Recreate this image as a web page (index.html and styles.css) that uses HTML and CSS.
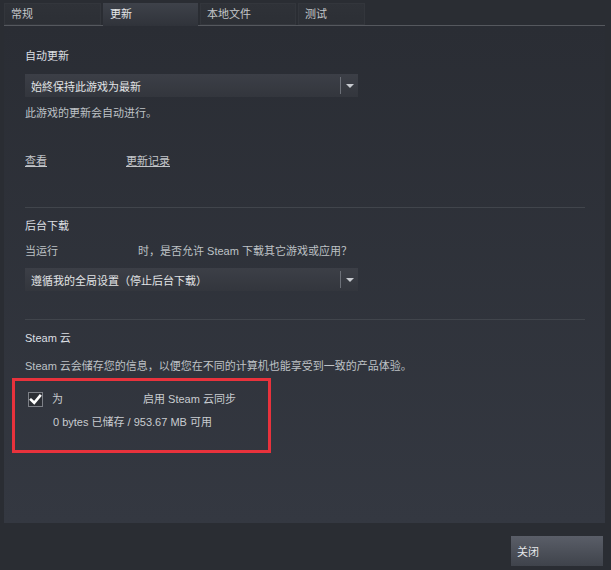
FILE: index.html
```html
<!DOCTYPE html>
<html lang="zh-CN">
<head>
<meta charset="utf-8">
<title>属性 - 更新</title>
<link rel="stylesheet" href="styles.css">
</head>
<body>
<div class="window">
  <div class="tabs">
    <div class="tab wide">常规</div>
    <div class="tab active">更新</div>
    <div class="tab mid">本地文件</div>
    <div class="tab short">测试</div>
  </div>
  <div class="panel">
    <div class="heading">自动更新</div>
    <div class="select">
      <span class="select-text">始終保持此游戏为最新</span>
      <span class="select-btn"><span class="arrow"></span></span>
    </div>
    <div class="text note">此游戏的更新会自动进行。</div>
    <div class="links">
      <a class="link">查看</a>
      <a class="link second">更新记录</a>
    </div>
    <div class="sep first-sep"></div>
    <div class="heading sub">后台下载</div>
    <div class="text ask"><span class="gap-left">当运行</span><span>时，是否允许 Steam 下载其它游戏或应用？</span></div>
    <div class="select second-select">
      <span class="select-text">遵循我的全局设置（停止后台下载）</span>
      <span class="select-btn"><span class="arrow"></span></span>
    </div>
    <div class="sep second-sep"></div>
    <div class="heading sub">Steam 云</div>
    <div class="text desc">Steam 云会储存您的信息，以便您在不同的计算机也能享受到一致的产品体验。</div>
    <div class="cloud-box">
      <div class="check-row">
        <span class="checkbox">
          <svg width="13" height="13" viewBox="0 0 13 13"><path d="M2 6.8 L5.2 9.8 L11 2.8" fill="none" stroke="#ffffff" stroke-width="2.6" stroke-linecap="square"/></svg>
        </span>
        <span class="check-label"><span class="gap-for">为</span><span>启用 Steam 云同步</span></span>
      </div>
      <div class="text usage">0 bytes 已储存 / 953.67 MB 可用</div>
    </div>
  </div>
  <div class="footer">
    <button class="close-btn">关闭</button>
  </div>
</div>
</body>
</html>
```

FILE: styles.css
```css
html, body {
  margin: 0;
  padding: 0;
}
body {
  background: #2a2d33;
  font-family: "Liberation Sans", "Noto Sans CJK SC", Arial, sans-serif;
  font-size: 11px;
  color: #bec2c6;
  width: 611px;
  height: 570px;
  overflow: hidden;
}
.window {
  display: flex;
  flex-direction: column;
}
.tabs {
  display: flex;
  gap: 2px;
  padding: 3px 0 0 4px;
  height: 22px;
}
.tab {
  width: 88px;
  padding-left: 7px;
  line-height: 22px;
  color: #c4c7ca;
  background: linear-gradient(#2f3238, #2c2f35);
  box-shadow: inset 0 0 0 1px #33363c;
}
.tab.wide {
  width: 90px;
}
.tab.mid {
  width: 89px;
}
.tab.short {
  width: 60px;
}
.tab.active {
  background: linear-gradient(#3e424a, #30333a);
  color: #e4e6e8;
  box-shadow: none;
  position: relative;
  z-index: 1;
  margin-bottom: -1px;
}
.panel {
  margin: 0 6px 0 4px;
  height: 498px;
  border-top: 1px solid #55585e;
  background: linear-gradient(#2a2d34, #343841);
  padding: 22px 20px 0 21px;
  box-sizing: border-box;
  display: flex;
  flex-direction: column;
  align-items: flex-start;
}
.heading {
  line-height: 16px;
  color: #dcdfe2;
}
.text {
  line-height: 16px;
}
.select {
  margin-top: 10px;
  width: 333px;
  height: 23px;
  display: flex;
  align-items: center;
  background: linear-gradient(#3c3f47, #33363d);
  color: #e2e4e6;
  box-sizing: border-box;
}
.select-text {
  flex: 1;
  padding-left: 6px;
}
.select-btn {
  width: 17px;
  height: 17px;
  border-left: 1px solid #6c7078;
  display: flex;
  align-items: center;
  justify-content: center;
}
.arrow {
  width: 0;
  height: 0;
  border-left: 4px solid transparent;
  border-right: 4px solid transparent;
  border-top: 4px solid #c8cbd0;
}
.note {
  margin-top: 8px;
}
.links {
  margin-top: 32px;
  display: flex;
  line-height: 16px;
}
.link {
  color: #c3c6ca;
  text-decoration: underline;
}
.link.second {
  margin-left: 79px;
}
.sep {
  align-self: stretch;
  height: 1px;
  background: #41454c;
}
.first-sep {
  margin-top: 38px;
}
.second-sep {
  margin-top: 28px;
}
.heading.sub {
  margin-top: 10px;
}
.ask {
  margin-top: 9px;
}
.gap-left {
  display: inline-block;
  width: 113px;
}
.second-select {
  margin-top: 9px;
}
.desc {
  margin-top: 12px;
}
.cloud-box {
  margin: 4px 0 0 -13px;
  width: 259px;
  height: 75px;
  border: 3px solid #e8323c;
  box-sizing: border-box;
  padding: 10px 0 0 13px;
}
.check-row {
  display: flex;
  align-items: center;
  gap: 9px;
}
.checkbox {
  width: 15px;
  height: 15px;
  box-sizing: border-box;
  border: 1px solid #7d8087;
  background: #2c2f35;
  display: flex;
  align-items: center;
  justify-content: center;
}
.check-label {
  color: #c9ccd0;
  line-height: 16px;
}
.gap-for {
  display: inline-block;
  width: 91px;
}
.usage {
  margin-top: 7px;
  margin-left: 25px;
  color: #c9ccd0;
}
.footer {
  display: flex;
  justify-content: flex-end;
  padding: 13px 8px 0 0;
}
.close-btn {
  width: 92px;
  height: 30px;
  border: none;
  background: linear-gradient(#5a5e68, #3f434b);
  color: #e6e8ea;
  font-family: inherit;
  font-size: 11px;
  text-align: left;
  padding: 0 0 0 6px;
}
```
